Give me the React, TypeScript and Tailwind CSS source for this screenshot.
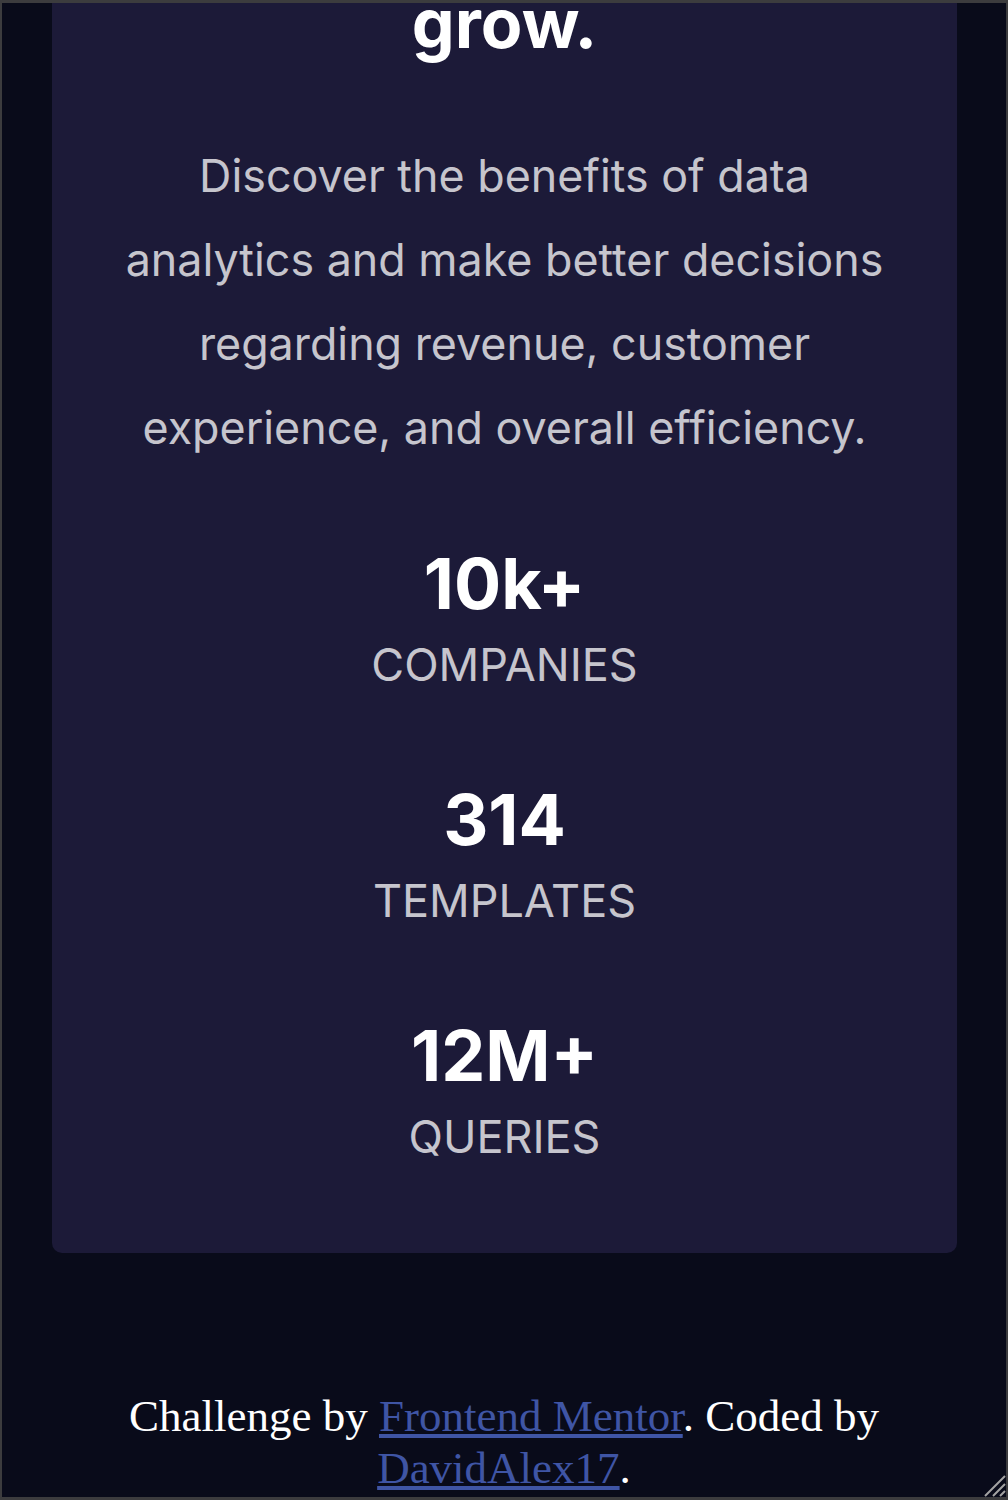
const stats = [
  { value: "10k+", label: "COMPANIES" },
  { value: "314", label: "TEMPLATES" },
  { value: "12M+", label: "QUERIES" },
];

const ResizeHandle = () => (
  <svg
    className="absolute right-0 bottom-0"
    width="28"
    height="28"
    viewBox="0 0 28 28"
  >
    <path d="M27 7 L7 27 M27 15 L15 27 M27 22 L22 27" stroke="#a3a3a3" strokeWidth="2" />
  </svg>
);

export default function App() {
  return (
    <div className="relative w-[1008px] h-[1500px] overflow-hidden bg-[#090b1a] border-x-2 border-y-[3px] border-[#3c3c3e] font-['Inter',sans-serif]">
      <div className="ml-[50px] w-[905px] rounded-[10px] bg-[#1c1a38] px-[62px] pb-[90px] text-center">
        <h1 className="-mt-[16px] text-[68px] leading-[72px] font-bold text-white">grow.</h1>
        <p className="mt-[75px] text-[44.8px] leading-[84px] text-white/75">
          Discover the benefits of data analytics and make better decisions regarding revenue, customer experience, and overall efficiency.
        </p>
        <div className="mt-[78px] flex flex-col gap-[93px]">
          {stats.map((s) => (
            <div key={s.label} className="flex flex-col items-center">
              <span className="text-[70px] leading-[72px] font-bold text-white">{s.value}</span>
              <span className="mt-[19px] text-[45px] leading-[52px] text-white/75">{s.label}</span>
            </div>
          ))}
        </div>
      </div>
      <footer className="mt-[137px] px-[24px] text-center text-[45px] leading-[52px] text-white font-['Liberation_Serif',serif]">
        Challenge by{" "}
        <a href="#" className="text-[#3f55a5] underline">
          Frontend Mentor
        </a>
        . Coded by{" "}
        <a href="#" className="text-[#3f55a5] underline">
          DavidAlex17
        </a>
        .
      </footer>
      <ResizeHandle />
    </div>
  );
}
